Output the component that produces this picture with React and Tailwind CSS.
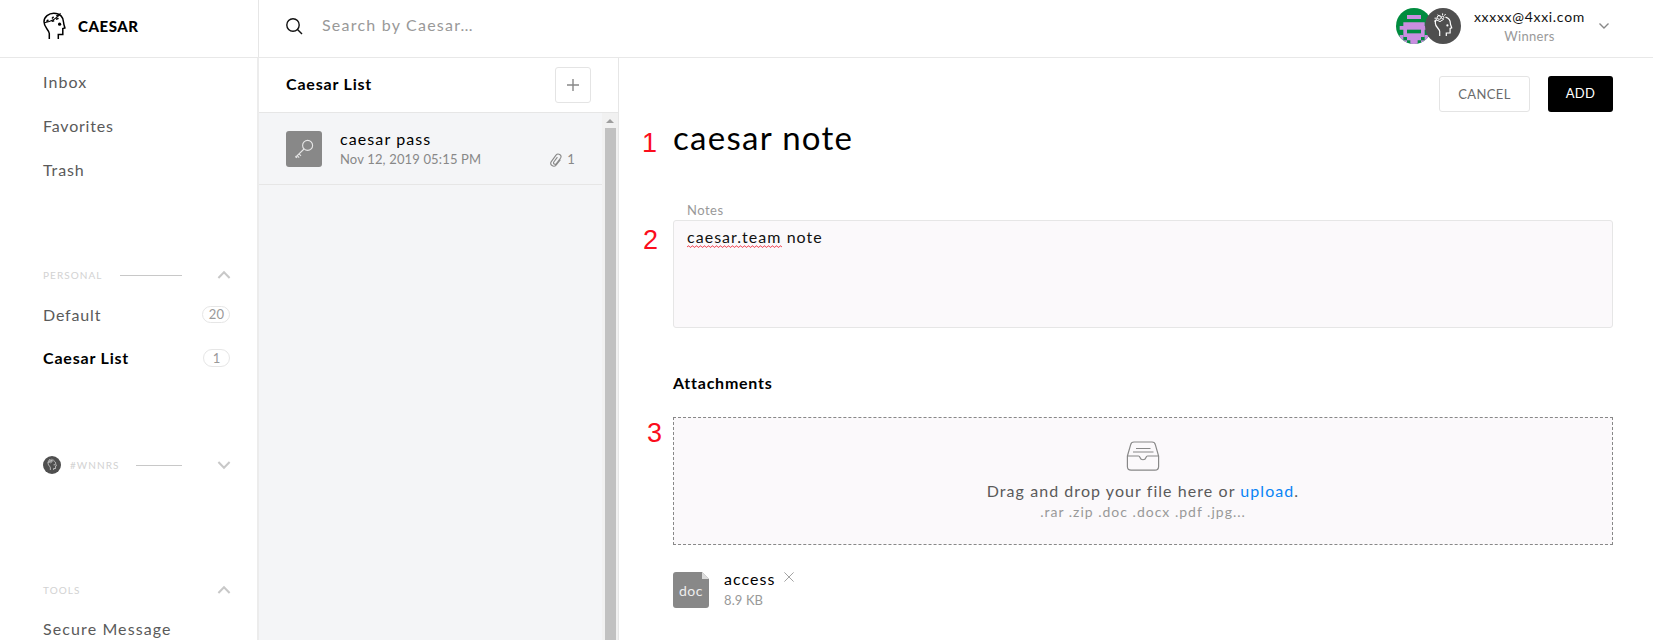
import React from "react";

const ChevronUp = () => (
  <svg width="14" height="10" viewBox="0 0 14 10" fill="none" stroke="#c8c8c8" strokeWidth="2">
    <path d="M1.4 8 7 2.2 12.6 8" />
  </svg>
);

const ChevronDown = () => (
  <svg width="14" height="10" viewBox="0 0 14 10" fill="none" stroke="#c8c8c8" strokeWidth="2">
    <path d="M1.4 2 7 7.8 12.6 2" />
  </svg>
);

const CaesarLogo = () => (
  <svg width="24" height="28" viewBox="0 0 24 28" fill="none" stroke="#000" strokeWidth="1.5">
    <path d="M6.3 27V21.500C5.800 17.500 1 15.600 1 9.800 1 4.600 5.800 1.200 10.800 1.200c6.200 0 9.800 4 9.800 9.300 0 1.600.9 3.900 1.300 5.400l-2.100.7v6h-4.500V27" />
    <path d="M1.300 10.800C6 9.800 13.500 7.600 17.500 1.200" strokeWidth="1.100" />
    <path d="M3.500 9.600 5.400 7.800M8.600 9.300l2.600-.6M9 6.600l1.600-1.800M13 7.200l2.600-.8M13.400 4.200l1.600-1.400" strokeWidth="1.500" />
    <circle cx="16.600" cy="12.200" r="1.600" fill="#000" stroke="none" />
  </svg>
);

const TeamAvatar = ({ size }) => (
  <svg width={size} height={size} viewBox="0 0 36 36" fill="none" stroke="#fff" strokeWidth="1.2">
    <circle cx="18" cy="18" r="18" fill="#4f4f4f" stroke="none" />
    <path d="M14.7 28v-4.5c-.4-3-4.4-4.6-4.4-8.6 0-1.6.5-2.6 1.2-3.400M20.500 9.200c3.400 1 4.900 3.600 4.900 6.400 0 1.400 1 3 1.300 4.200l-1.600.6v4.600h-3.800V28" />
    <path d="M9 13.400l2.400-1.600 3.600 1.800 3.800-2.400M9.500 10.200h2.600M12.500 6.800l2.200 1.400M17.600 5.400v1.800M19.400 7.600l1.200-1.600" strokeWidth="1" />
    <circle cx="14.200" cy="9.400" r="1.900" strokeWidth="1" />
    <circle cx="17.600" cy="9.400" r="1.200" strokeWidth="1" />
    <circle cx="22.400" cy="17.400" r="1.100" fill="#fff" stroke="none" />
  </svg>
);

const Identicon = () => (
  <svg width="36" height="36" viewBox="0 0 108 108">
    <defs>
      <clipPath id="round">
        <circle cx="54" cy="54" r="54" />
      </clipPath>
    </defs>
    <g clipPath="url(#round)">
      <rect width="108" height="108" fill="#008c3f" />
      <g fill="#c98ee0">
        <rect x="33" y="21" width="42" height="12" />
        <path d="M22 43h64v11h11v11H86v22H75v10H65v11H43V97H33V87H22V65H11V54h11z" />
        <rect x="11" y="81" width="11" height="27" />
        <rect x="86" y="81" width="11" height="27" />
        <rect x="22" y="97" width="11" height="11" />
        <rect x="75" y="97" width="11" height="11" />
      </g>
      <rect x="33" y="65" width="42" height="11" fill="#008c3f" />
    </g>
  </svg>
);

const SectionHead = ({ label, avatar, open, line = true }) => (
  <div className="flex h-[20px] items-center">
    {avatar && (
      <span className="mr-[9px]">
        <TeamAvatar size={18} />
      </span>
    )}
    <span className="text-[10px] leading-[20px] tracking-[1.05px] text-[#d2d2d2]">{label}</span>
    {line ? <span className={`h-px flex-1 bg-[#c8c8c8] ${avatar ? "ml-[17px]" : "ml-[18px]"}`} /> : <span className="flex-1" />}
    <span className="ml-[35px]">{open ? <ChevronUp /> : <ChevronDown />}</span>
  </div>
);

const Marker = ({ children, className }) => (
  <span className={`absolute font-['Liberation_Sans',sans-serif] text-[27px] leading-[30px] tracking-normal text-[#fb0d1c] ${className}`}>
    {children}
  </span>
);

function Sidebar() {
  return (
    <aside className="flex w-[259px] shrink-0 flex-col border-r-2 border-[#ececec] pl-[43px] pr-[26px] text-[16px] leading-[44px] tracking-[1.1px] text-[#5a5a5a]">
      <nav className="flex flex-col pt-[2px]">
        <a className="h-[44px]">Inbox</a>
        <a className="h-[44px] tracking-[0.8px]">Favorites</a>
        <a className="h-[44px] tracking-[0.9px]">Trash</a>
      </nav>
      <div className="pt-[73px]">
        <SectionHead label="PERSONAL" open />
      </div>
      <div className="mt-[8px] flex h-[43px] items-center justify-between pr-px">
        <span className="tracking-[0.85px]">Default</span>
        <span className="flex h-[17px] w-[28px] items-center justify-center rounded-full border border-[#e6e6e6] pl-px text-[13px] leading-[15px] tracking-[0.2px] text-[#999]">20</span>
      </div>
      <div className="flex h-[44px] items-center justify-between pr-px">
        <span className="font-bold tracking-[0.8px] text-black">Caesar List</span>
        <span className="flex h-[18px] w-[27px] items-center justify-center rounded-full border border-[#e6e6e6] text-[13px] leading-[15px] tracking-normal text-[#999]">1</span>
      </div>
      <div className="pt-[75px]">
        <SectionHead label="#WNNRS" avatar />
      </div>
      <div className="pt-[105px]">
        <SectionHead label="TOOLS" open line={false} />
      </div>
      <a className="mt-[7px] h-[44px] whitespace-nowrap">Secure Message</a>
    </aside>
  );
}

function ListPanel() {
  return (
    <section className="flex w-[360px] shrink-0 flex-col border-r border-[#e6e6e6] bg-[#f4f5f7]">
      <div className="flex h-[55px] items-center justify-between border-b border-[#e6e6e6] bg-white pl-[27px] pr-[27px]">
        <h2 className="-mt-[2px] text-[16px] font-bold tracking-[0.8px] text-black">Caesar List</h2>
        <button className="flex size-[36px] items-center justify-center rounded-[3px] border border-[#e4e4e4]">
          <svg width="12" height="12" viewBox="0 0 12 12" stroke="#888" strokeWidth="1.4">
            <path d="M6 0v12M0 6h12" />
          </svg>
        </button>
      </div>
      <div className="flex flex-1">
        <div className="flex-1">
          <div className="flex h-[72px] border-b border-[#e6e6e6] pl-[27px] pr-[28px] pt-[18px]">
            <span className="flex size-[36px] items-center justify-center rounded-[3px] bg-[#888]">
              <svg width="20" height="20" viewBox="0 0 20 20" fill="none" stroke="#e6e6e6" strokeWidth="1.1">
                <circle cx="13.6" cy="6.4" r="5" />
                <path d="M10 10 1.4 18.4M3.2 16.6l2 2M5 14.8l2 2M1.5 17.2l1.6 1.6" />
              </svg>
            </span>
            <div className="ml-[18px] flex flex-1 flex-col">
              <span className="h-[19px] text-[16px] leading-[15px] tracking-[1.1px] text-black">caesar pass</span>
              <div className="flex items-center text-[13px] leading-[16px] tracking-[0.15px] text-[#888]">
                <span className="flex-1">Nov 12, 2019 05:15 PM</span>
                <svg className="mt-[3px]" width="12" height="14" viewBox="0 0 12 14" fill="none" stroke="#888" strokeWidth="1.1">
                  <path d="M10.4 6.6 6.3 11.800C3.600 15-.7 11.700 1.300 8.600L6 2.200C8-.4 12.300 2 10.600 5L6.400 10.600C5.200 12.200 2.700 10.800 3.800 9L7.400 4.100" />
                </svg>
                <span className="-mr-px ml-[5px]">1</span>
              </div>
            </div>
          </div>
        </div>
        <div className="flex w-[16px] flex-col items-center bg-[#f1f1f1]">
          <span className="flex h-[15px] items-center">
            <svg width="8" height="4" viewBox="0 0 8 4">
              <path d="M4 0 8 4H0z" fill="#9e9e9e" />
            </svg>
          </span>
          <span className="ml-px w-[11px] flex-1 bg-[#c1c1c1]" />
        </div>
      </div>
    </section>
  );
}

function NoteForm() {
  return (
    <main className="relative flex flex-1 flex-col pl-[54px] pr-[40px]">
      <div className="flex justify-end gap-[18px] pt-[18px]">
        <button className="h-[36px] w-[91px] rounded-[3px] border border-[#e4e4e4] pt-px text-[13px] tracking-[0.4px] text-[#6b6b6b]">CANCEL</button>
        <button className="h-[36px] w-[65px] rounded-[3px] bg-black text-[13px] tracking-[0.3px] text-white">ADD</button>
      </div>
      <h1 className="mt-[5px] h-[40px] text-[33px] leading-[40px] tracking-[1.3px] text-black">caesar note</h1>
      <label className="mt-[45px] h-[18px] pl-[14px] text-[13px] leading-[17px] tracking-[0.5px] text-[#999]">Notes</label>
      <div className="h-[108px] rounded-[3px] border border-[#e6e6e6] bg-[#fbf9fb] pl-[13px] pt-[4px] text-[16px] leading-[24px] tracking-[1.03px] text-[#111]">
        <span className="relative">
          caesar.team
          <svg className="absolute bottom-[-2px] left-0" width="95" height="3">
            <defs>
              <pattern id="wave" width="4" height="3" patternUnits="userSpaceOnUse">
                <path d="M0 2.300 1 .9 2 .9 3 2.300 4 2.300" fill="none" stroke="#f0525f" strokeWidth="1" />
              </pattern>
            </defs>
            <rect width="95" height="3" fill="url(#wave)" />
          </svg>
        </span>{" "}
        note
      </div>
      <h3 className="mt-[44px] h-[22px] text-[16px] font-bold leading-[22px] tracking-[0.75px] text-black">Attachments</h3>
      <div className="mt-[23px] flex h-[128px] flex-col items-center border border-dashed border-[#888] bg-[#fbf9fb] pt-[23px]">
        <svg width="34" height="30" viewBox="0 0 34 30" fill="none" stroke="#888" strokeWidth="1.2">
          <path d="M1.400 15 4.600 3.800C5.100 1.700 6 1 8 1h18c2 0 2.900.7 3.400 2.800L32.600 15v10.500c0 2.500-1.200 3.700-3.700 3.700H5.100c-2.500 0-3.700-1.200-3.700-3.700zM1.600 15h10.900c1 0 1.200.6 1.500 1.500 1 3 5 3 6 0 .3-.9.500-1.500 1.500-1.500h10.900" />
          <path d="M10 7.500h14.500M7 11h20.500" />
        </svg>
        <p className="mt-[8px] text-[16px] leading-[24px] tracking-[1.06px] text-[#5a5a5a]">
          Drag and drop your file here or <a className="text-[#0a84f5]">upload</a>.
        </p>
        <p className="text-[14px] leading-[18px] tracking-[1px] text-[#999]">.rar .zip .doc .docx .pdf .jpg...</p>
      </div>
      <div className="mt-[27px] flex">
        <span className="relative flex size-[36px] items-center justify-center rounded-[3px] bg-[#888] text-[14px] tracking-[0.5px] text-[#eee]">
          doc
          <svg className="absolute right-0 top-0" width="7" height="7">
            <path d="M0 0h7v7z" fill="#fff" />
            <path d="M0 0v7h7z" fill="#dcdcdc" />
          </svg>
        </span>
        <div className="ml-[15px] flex flex-col">
          <span className="h-[20px] text-[16px] leading-[14px] tracking-[1.05px] text-black">access</span>
          <span className="text-[13px] leading-[17px] tracking-[0.1px] text-[#999]">8.9 KB</span>
        </div>
        <svg className="ml-[8px]" width="10" height="10" viewBox="0 0 10 10" stroke="#999" strokeWidth="0.9">
          <path d="M.4.4l9.200 9.200M9.600.4.400 9.600" />
        </svg>
      </div>
      <Marker className="left-[23px] top-[70px]">1</Marker>
      <Marker className="left-[24px] top-[167px]">2</Marker>
      <Marker className="left-[28px] top-[360px]">3</Marker>
    </main>
  );
}

export default function App() {
  return (
    <div className="flex h-[640px] w-full flex-col overflow-hidden bg-white font-['Lato',sans-serif]">
      <header className="flex h-[58px] shrink-0 border-b border-[#e8e8e8]">
        <div className="flex w-[259px] items-start border-r border-[#e6e6e6] pl-[43px] pt-[12px]">
          <CaesarLogo />
          <span className="ml-[11px] mt-[4px] text-[15px] font-black leading-[20px] tracking-[0.55px] text-black">CAESAR</span>
        </div>
        <div className="flex flex-1 items-center pl-[27px]">
          <svg className="mt-[-5px]" width="17" height="17" viewBox="0 0 17 17" fill="none" stroke="#111" strokeWidth="1.400">
            <circle cx="7" cy="7" r="6.200" />
            <path d="M11.500 11.500 16 16" />
          </svg>
          <span className="mt-[-7px] pl-[19px] text-[16px] leading-[20px] tracking-[1.22px] text-[#999]">Search by Caesar…</span>
        </div>
        <div className="flex pr-[43px] pt-[8px]">
          <Identicon />
          <span className="relative -ml-[7px]">
            <TeamAvatar size={36} />
          </span>
          <div className="ml-[13px] flex flex-col items-center">
            <span className="text-[14px] leading-[18px] tracking-[0.7px] text-[#111]">xxxxx@4xxi.com</span>
            <span className="text-[13px] leading-[20px] tracking-[0.3px] text-[#999]">Winners</span>
          </div>
          <svg className="ml-[13px] mt-[14px]" width="12" height="8" viewBox="0 0 12 8" fill="none" stroke="#888" strokeWidth="1.400">
            <path d="M1.500 1.500 6 6l4.500-4.500" />
          </svg>
        </div>
      </header>
      <div className="flex min-h-0 flex-1">
        <Sidebar />
        <ListPanel />
        <NoteForm />
      </div>
    </div>
  );
}
